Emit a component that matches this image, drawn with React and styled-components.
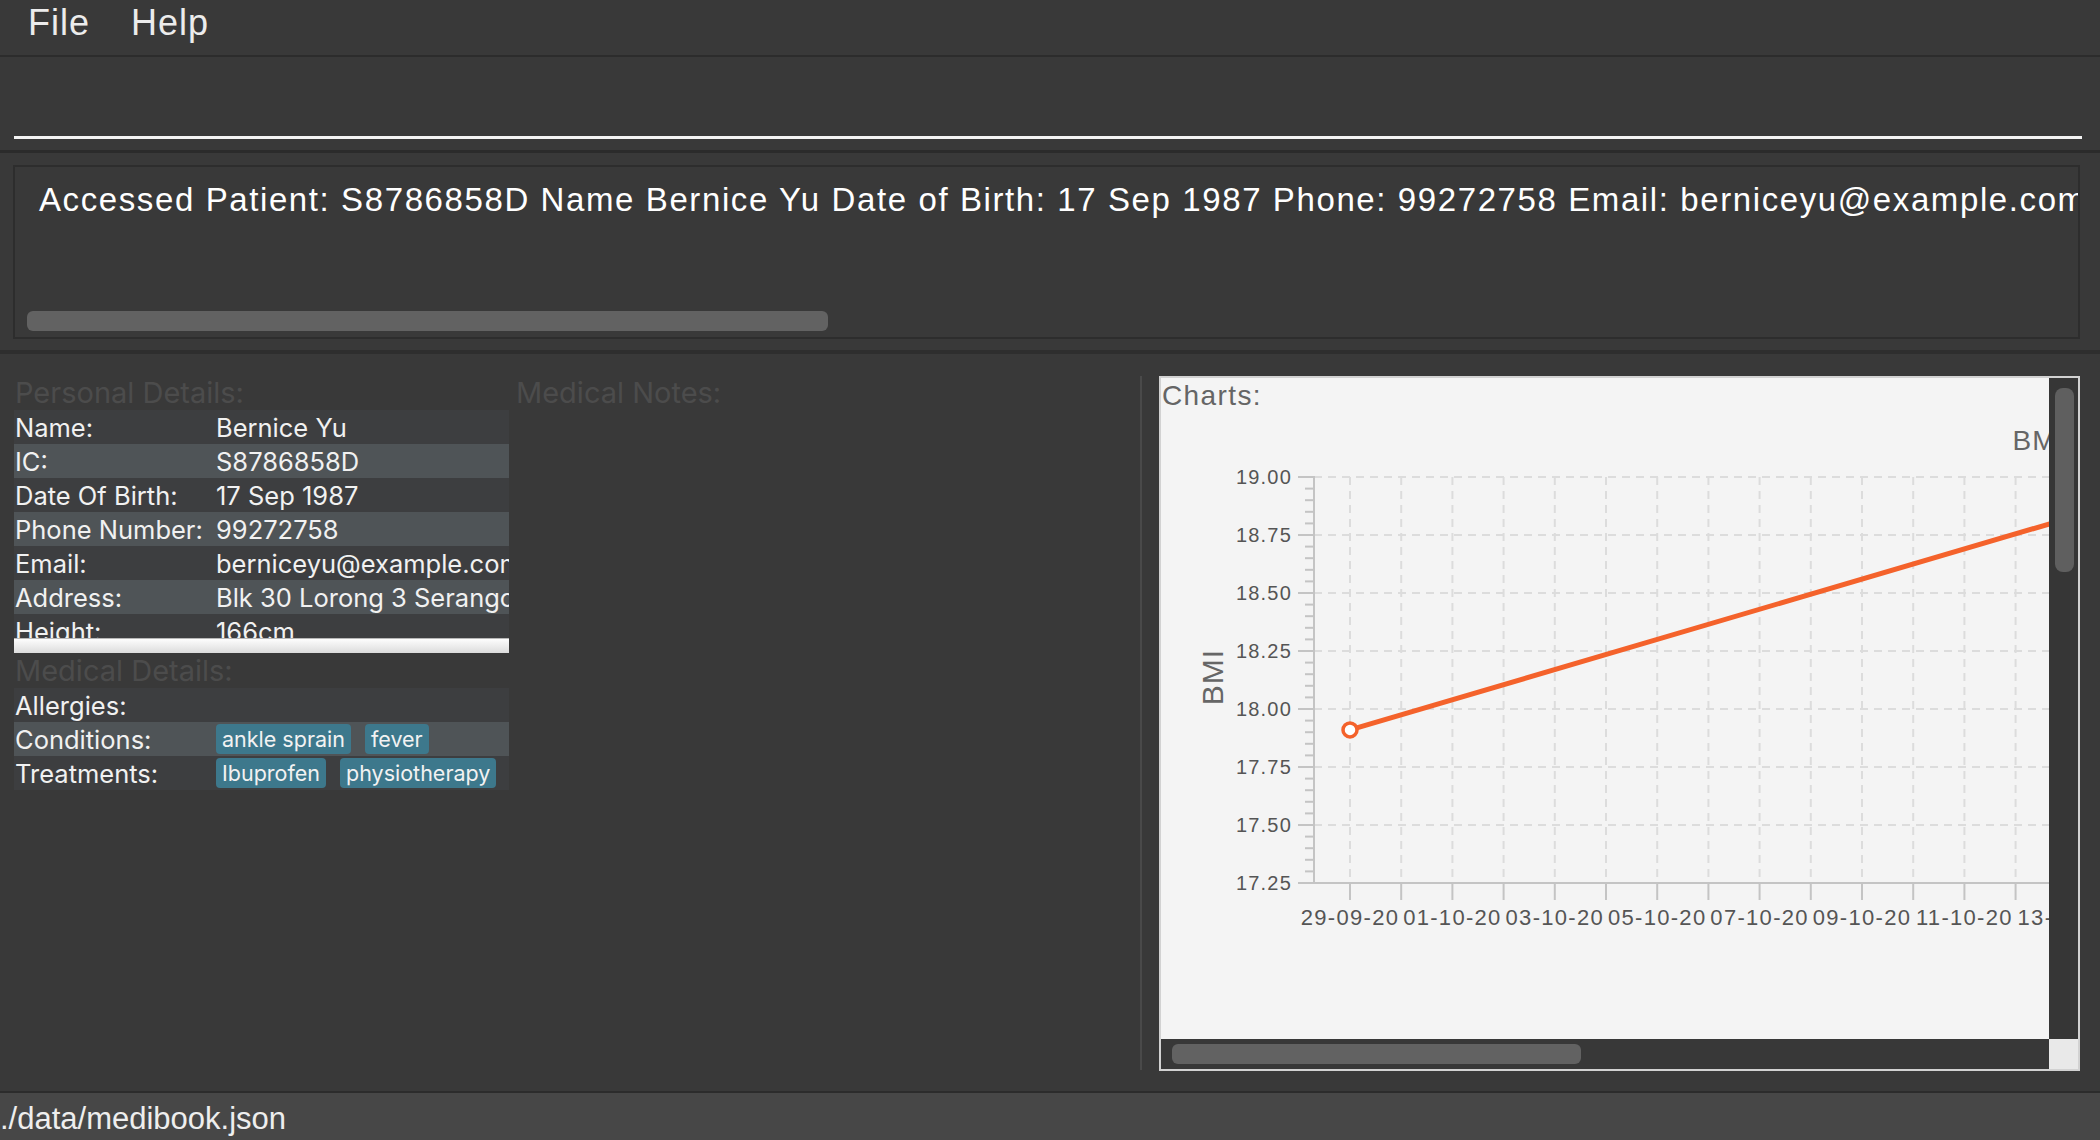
import React from "react";
import styled, { createGlobalStyle } from "styled-components";

const GlobalStyle = createGlobalStyle`
  html, body {
    margin: 0;
    padding: 0;
    background: #393939;
    overflow: hidden;
  }
  * { box-sizing: border-box; }
`;

const SANS = `"Liberation Sans", Arial, sans-serif`;
const UI = `Inter, "Noto Sans", sans-serif`;

const Window = styled.div`
  width: 2100px;
  height: 1140px;
  display: flex;
  flex-direction: column;
  background: #393939;
  font-family: ${SANS};
  overflow: hidden;
`;

const MenuBar = styled.div`
  height: 57px;
  flex: none;
  display: flex;
  padding-left: 7px;
  border-bottom: 2px solid #2c2c2c;
`;

const MenuItem = styled.div`
  padding: 2px 20px 0 21px;
  font-size: 36px;
  letter-spacing: 1px;
  color: #ececec;
`;

const CommandArea = styled.div`
  height: 96px;
  flex: none;
  padding: 79px 18px 0 14px;
  border-bottom: 3px solid #2b2b2b;
`;

const CommandInput = styled.div`
  height: 3px;
  background: #f4f4f4;
`;

const ResultArea = styled.div`
  height: 201px;
  flex: none;
  padding: 12px 20px 0 13px;
  border-bottom: 4px solid #2e2e2e;
`;

const ResultBox = styled.div`
  height: 174px;
  border: 2px solid #2d2d2d;
  background: #393939;
  position: relative;
  overflow: hidden;
`;

const ResultText = styled.div`
  padding: 14px 0 0 24px;
  font-size: 33px;
  letter-spacing: 1.6px;
  color: #ffffff;
  white-space: nowrap;
`;

const HThumb = styled.div`
  position: absolute;
  left: ${(p) => p.$left}px;
  bottom: ${(p) => p.$bottom}px;
  width: ${(p) => p.$width}px;
  height: 20px;
  border-radius: 6px;
  background: #626262;
`;

const Main = styled.div`
  flex: 1;
  display: flex;
  padding: 22px 20px 0 14px;
  border-bottom: 2px solid #2c2c2c;
  min-height: 0;
`;

const LeftPane = styled.div`
  width: 495px;
  flex: none;
  display: flex;
  flex-direction: column;
`;

const SectionLabel = styled.div`
  font-family: ${UI};
  font-size: 29px;
  color: #4c4c4c;
  height: ${(p) => p.$h}px;
  line-height: ${(p) => p.$h}px;
  padding-left: 1px;
  white-space: nowrap;
`;

const DetailsClip = styled.div`
  height: ${(p) => p.$h}px;
  overflow: hidden;
`;

const Row = styled.div`
  height: 34px;
  display: grid;
  grid-template-columns: 201px 1fr;
  align-items: center;
  background: ${(p) => (p.$alt ? "#4f5457" : "#3d3e40")};
  font-family: ${UI};
  font-size: 25.5px;
  color: #f1f1f1;
  white-space: nowrap;
  overflow: hidden;
`;

const Cell = styled.div`
  padding-left: 1px;
  overflow: hidden;
  display: flex;
  gap: 14px;
`;

const Tag = styled.span`
  display: inline-block;
  height: 30px;
  line-height: 30px;
  padding: 0 6px;
  border-radius: 4px;
  background: #3d788c;
  color: #f2f2f2;
  font-size: 21.5px;
`;

const WhiteScroll = styled.div`
  height: 15px;
  border-top: 1px solid #b8b8b8;
  background: linear-gradient(#fdfdfd, #dcdcdc);
`;

const NotesPane = styled.div`
  flex: 1;
  padding-left: 6px;
`;

const Divider = styled.div`
  width: 2px;
  flex: none;
  background: #4a4a4a;
  height: 694px;
`;

const ChartPanel = styled.div`
  width: 921px;
  height: 695px;
  flex: none;
  margin-left: 17px;
  border: 2px solid #d2d2d2;
  display: grid;
  grid-template-columns: 1fr 29px;
  grid-template-rows: 1fr 30px;
  background: #f4f4f4;
`;

const ChartView = styled.div`
  overflow: hidden;
  position: relative;
`;

const ChartLabel = styled.div`
  height: 40px;
  padding: 2px 0 0 1px;
  font-size: 28px;
  letter-spacing: 1.4px;
  color: #656565;
`;

const VTrack = styled.div`
  background: #363636;
  position: relative;
`;

const VThumb = styled.div`
  position: absolute;
  left: 6px;
  top: 10px;
  width: 19px;
  height: 184px;
  border-radius: 8px;
  background: #5f5f5f;
`;

const HTrack = styled.div`
  background: #383838;
  position: relative;
`;

const Corner = styled.div`
  background: #e9e9e9;
`;

const StatusBar = styled.div`
  height: 47px;
  flex: none;
  background: #474747;
  color: #eeeeee;
  font-size: 31px;
  padding-top: 8px;
  white-space: nowrap;
`;

const personal = [
  ["Name:", "Bernice Yu"],
  ["IC:", "S8786858D"],
  ["Date Of Birth:", "17 Sep 1987"],
  ["Phone Number:", "99272758"],
  ["Email:", "berniceyu@example.com"],
  ["Address:", "Blk 30 Lorong 3 Serangoon Gardens, #07-18"],
  ["Height:", "166cm"],
];

const medical = [
  ["Allergies:", []],
  ["Conditions:", ["ankle sprain", "fever"]],
  ["Treatments:", ["Ibuprofen", "physiotherapy"]],
];

const AXIS = "#c4c4c4";
const GRID = "#dcdcdc";
const TEXT = "#555555";
const LINE = "#f4622b";

const yFor = (v) => 59 + ((19 - v) / 0.25) * 58;
const xFor = (i) => 189 + 51.2 * i;

const yMajors = [19, 18.75, 18.5, 18.25, 18, 17.75, 17.5, 17.25];
const dates = [
  "29-09-20", "01-10-20", "03-10-20", "05-10-20", "07-10-20",
  "09-10-20", "11-10-20", "13-10-20", "15-10-20",
];

function BmiChart() {
  const ticks = Array.from({ length: 17 }, (_, i) => i);
  const minors = [];
  for (let m = 0; m < 7; m++) {
    for (let k = 1; k < 5; k++) minors.push(yFor(19 - m * 0.25) + k * 11.6);
  }
  const x0 = 189;
  const y0 = yFor(17.91);
  const slope = -0.2945;

  return (
    <svg width="1000" height="560" style={{ display: "block" }}>
      <text x="878" y="32" fontSize="28" fill="#666" textAnchor="middle" letterSpacing="1" fontFamily={SANS}>
        BMI
      </text>
      <text
        transform="translate(62 259) rotate(-90)"
        fontSize="30"
        fill="#666"
        textAnchor="middle"
        letterSpacing="1"
        fontFamily={SANS}
      >
        BMI
      </text>

      {yMajors.map((v) => (
        <line key={"hg" + v} x1="153" x2="1000" y1={yFor(v)} y2={yFor(v)} stroke={GRID} strokeWidth="2" strokeDasharray="8 6" />
      ))}
      {ticks.map((i) => (
        <line key={"vg" + i} x1={xFor(i)} x2={xFor(i)} y1="59" y2="465" stroke={GRID} strokeWidth="2" strokeDasharray="8 6" />
      ))}

      <line x1="153" x2="153" y1="58" y2="466" stroke={AXIS} strokeWidth="2" />
      <line x1="152" x2="1000" y1="465" y2="465" stroke={AXIS} strokeWidth="2" />

      {yMajors.map((v) => (
        <g key={"yl" + v}>
          <line x1="137" x2="153" y1={yFor(v)} y2={yFor(v)} stroke={AXIS} strokeWidth="2" />
          <text x="131" y={yFor(v) + 7} fontSize="20" fill={TEXT} textAnchor="end" letterSpacing="1.2" fontFamily={SANS}>
            {v.toFixed(2)}
          </text>
        </g>
      ))}
      {minors.map((y, i) => (
        <line key={"mn" + i} x1="144" x2="153" y1={y} y2={y} stroke={AXIS} strokeWidth="2" />
      ))}

      {ticks.map((i) => (
        <line key={"xt" + i} x1={xFor(i)} x2={xFor(i)} y1="465" y2="482" stroke={AXIS} strokeWidth="2" />
      ))}
      {dates.map((d, j) => (
        <text key={d} x={xFor(j * 2)} y="507" fontSize="22" fill={TEXT} textAnchor="middle" letterSpacing="1.3" fontFamily={SANS}>
          {d}
        </text>
      ))}

      <line x1={x0} y1={y0} x2={1000} y2={y0 + slope * (1000 - x0)} stroke={LINE} strokeWidth="5" strokeLinecap="round" />
      <circle cx={x0} cy={y0} r="7" fill="#ffffff" stroke={LINE} strokeWidth="3.5" />
    </svg>
  );
}

export default function App() {
  return (
    <>
      <GlobalStyle />
      <Window>
        <MenuBar>
          <MenuItem>File</MenuItem>
          <MenuItem>Help</MenuItem>
        </MenuBar>

        <CommandArea>
          <CommandInput />
        </CommandArea>

        <ResultArea>
          <ResultBox>
            <ResultText>
              Accessed Patient: S8786858D Name Bernice Yu Date of Birth: 17 Sep 1987 Phone: 99272758 Email: berniceyu@example.com
            </ResultText>
            <HThumb $left={12} $bottom={6} $width={801} />
          </ResultBox>
        </ResultArea>

        <Main>
          <LeftPane>
            <SectionLabel $h={34}>Personal Details:</SectionLabel>
            <DetailsClip $h={228}>
              {personal.map(([k, v], i) => (
                <Row key={k} $alt={i % 2 === 1}>
                  <Cell>{k}</Cell>
                  <Cell>{v}</Cell>
                </Row>
              ))}
            </DetailsClip>
            <WhiteScroll />
            <SectionLabel $h={35}>Medical Details:</SectionLabel>
            {medical.map(([k, tags], i) => (
              <Row key={k} $alt={i % 2 === 1}>
                <Cell>{k}</Cell>
                <Cell>
                  {tags.map((t) => (
                    <Tag key={t}>{t}</Tag>
                  ))}
                </Cell>
              </Row>
            ))}
          </LeftPane>

          <NotesPane>
            <SectionLabel $h={34}>Medical Notes:</SectionLabel>
          </NotesPane>

          <Divider />

          <ChartPanel>
            <ChartView>
              <ChartLabel>Charts:</ChartLabel>
              <BmiChart />
            </ChartView>
            <VTrack>
              <VThumb />
            </VTrack>
            <HTrack>
              <HThumb $left={11} $bottom={5} $width={409} />
            </HTrack>
            <Corner />
          </ChartPanel>
        </Main>

        <StatusBar>./data/medibook.json</StatusBar>
      </Window>
    </>
  );
}
